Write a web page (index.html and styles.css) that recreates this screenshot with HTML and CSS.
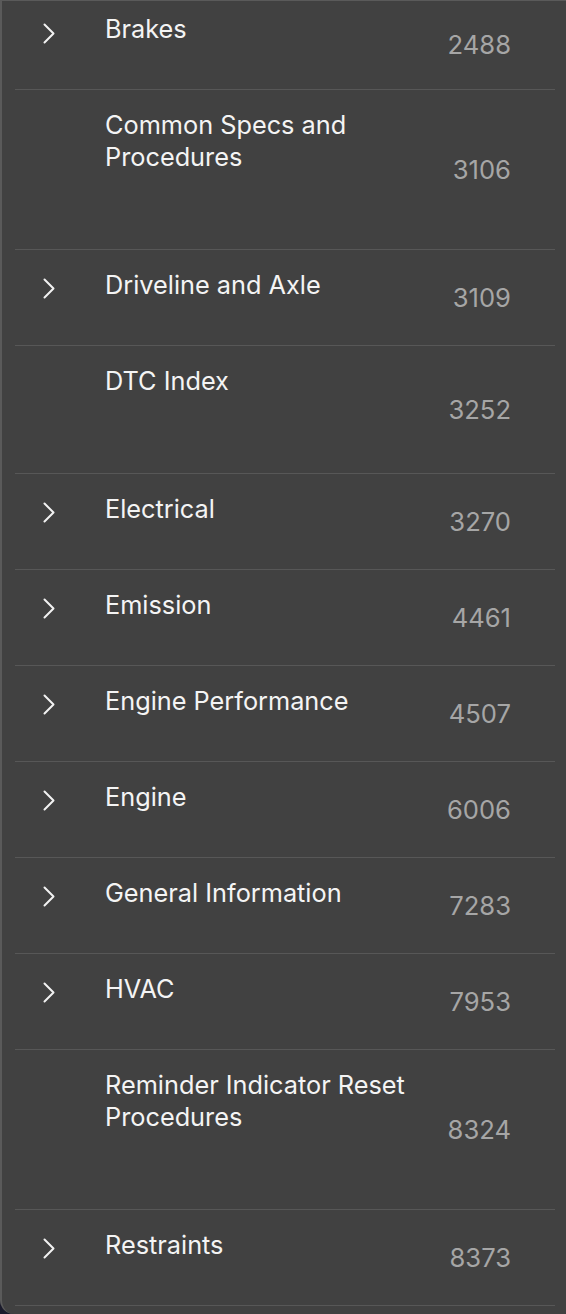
FILE: index.html
```html
<!DOCTYPE html>
<html>
<head>
<meta charset="utf-8">
<link rel="stylesheet" href="styles.css">
</head>
<body>
<div class="panel">
  <ul class="list">
    <li class="row first"><span class="chev"><svg width="12" height="21" viewBox="0 0 12 21"><polyline points="1.5,1.5 10.5,10.5 1.5,19.5" fill="none" stroke="#f2f2f2" stroke-width="2" stroke-linecap="round" stroke-linejoin="round"/></svg></span><span class="title">Brakes</span><span class="num">2488</span></li>
    <li class="row double"><span class="chev"></span><span class="title">Common Specs and Procedures</span><span class="num">3106</span></li>
    <li class="row"><span class="chev"><svg width="12" height="21" viewBox="0 0 12 21"><polyline points="1.5,1.5 10.5,10.5 1.5,19.5" fill="none" stroke="#f2f2f2" stroke-width="2" stroke-linecap="round" stroke-linejoin="round"/></svg></span><span class="title">Driveline and Axle</span><span class="num">3109</span></li>
    <li class="row tall"><span class="chev"></span><span class="title">DTC Index</span><span class="num">3252</span></li>
    <li class="row"><span class="chev"><svg width="12" height="21" viewBox="0 0 12 21"><polyline points="1.5,1.5 10.5,10.5 1.5,19.5" fill="none" stroke="#f2f2f2" stroke-width="2" stroke-linecap="round" stroke-linejoin="round"/></svg></span><span class="title">Electrical</span><span class="num">3270</span></li>
    <li class="row"><span class="chev"><svg width="12" height="21" viewBox="0 0 12 21"><polyline points="1.5,1.5 10.5,10.5 1.5,19.5" fill="none" stroke="#f2f2f2" stroke-width="2" stroke-linecap="round" stroke-linejoin="round"/></svg></span><span class="title">Emission</span><span class="num">4461</span></li>
    <li class="row"><span class="chev"><svg width="12" height="21" viewBox="0 0 12 21"><polyline points="1.5,1.5 10.5,10.5 1.5,19.5" fill="none" stroke="#f2f2f2" stroke-width="2" stroke-linecap="round" stroke-linejoin="round"/></svg></span><span class="title">Engine Performance</span><span class="num">4507</span></li>
    <li class="row"><span class="chev"><svg width="12" height="21" viewBox="0 0 12 21"><polyline points="1.5,1.5 10.5,10.5 1.5,19.5" fill="none" stroke="#f2f2f2" stroke-width="2" stroke-linecap="round" stroke-linejoin="round"/></svg></span><span class="title">Engine</span><span class="num">6006</span></li>
    <li class="row"><span class="chev"><svg width="12" height="21" viewBox="0 0 12 21"><polyline points="1.5,1.5 10.5,10.5 1.5,19.5" fill="none" stroke="#f2f2f2" stroke-width="2" stroke-linecap="round" stroke-linejoin="round"/></svg></span><span class="title">General Information</span><span class="num">7283</span></li>
    <li class="row"><span class="chev"><svg width="12" height="21" viewBox="0 0 12 21"><polyline points="1.5,1.5 10.5,10.5 1.5,19.5" fill="none" stroke="#f2f2f2" stroke-width="2" stroke-linecap="round" stroke-linejoin="round"/></svg></span><span class="title">HVAC</span><span class="num">7953</span></li>
    <li class="row double"><span class="chev"></span><span class="title">Reminder Indicator Reset Procedures</span><span class="num">8324</span></li>
    <li class="row"><span class="chev"><svg width="12" height="21" viewBox="0 0 12 21"><polyline points="1.5,1.5 10.5,10.5 1.5,19.5" fill="none" stroke="#f2f2f2" stroke-width="2" stroke-linecap="round" stroke-linejoin="round"/></svg></span><span class="title">Restraints</span><span class="num">8373</span></li>
  </ul>
</div>
</body>
</html>
```
FILE: styles.css
```css
* { box-sizing: border-box; }
html, body {
  margin: 0;
  padding: 0;
  background: #1b1b2c;
}
body {
  font-family: Inter, "Helvetica Neue", "Liberation Sans", sans-serif;
  height: 1314px;
  overflow: hidden;
}
.panel {
  height: 1314px;
  background: #414141;
  border-left: 2px solid #5a5a5a;
  border-top: 1px solid #5a5a5a;
  border-bottom-left-radius: 14px;
}
.list {
  list-style: none;
  margin: 0 11px 0 13px;
  padding: 0;
}
.row {
  display: grid;
  grid-template-columns: 90px 1fr auto;
  height: 96px;
  border-bottom: 1px solid #575757;
  padding-right: 44px;
}
.row.first { height: 89px; }
.row.tall { height: 128px; }
.row.double { height: 160px; }
.chev {
  align-self: start;
  padding-left: 28px;
  margin-top: 28px;
  height: 21px;
  display: flex;
}
.row.first .chev { margin-top: 22px; }
.title {
  align-self: start;
  padding-top: 19px;
  font-size: 25.3px;
  line-height: 32px;
  color: #f4f4f4;
  max-width: 320px;
}
.row.first .title { padding-top: 12px; }
.num {
  align-self: center;
  font-size: 25.6px;
  line-height: 32px;
  color: #a6a6a6;
}
```
